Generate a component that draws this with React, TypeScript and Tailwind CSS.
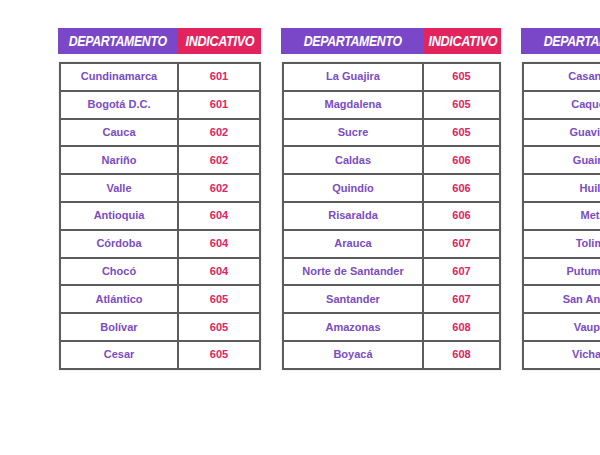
const tables = [
  {
    left: "w-[120px]",
    right: "w-[83px]",
    bodyLeft: "w-[118px]",
    rows: [
      ["Cundinamarca", "601"],
      ["Bogotá D.C.", "601"],
      ["Cauca", "602"],
      ["Nariño", "602"],
      ["Valle", "602"],
      ["Antioquia", "604"],
      ["Córdoba", "604"],
      ["Chocó", "604"],
      ["Atlántico", "605"],
      ["Bolívar", "605"],
      ["Cesar", "605"],
    ],
  },
  {
    left: "w-[143px]",
    right: "w-[77px]",
    bodyLeft: "w-[140px]",
    rows: [
      ["La Guajira", "605"],
      ["Magdalena", "605"],
      ["Sucre", "605"],
      ["Caldas", "606"],
      ["Quindío", "606"],
      ["Risaralda", "606"],
      ["Arauca", "607"],
      ["Norte de Santander", "607"],
      ["Santander", "607"],
      ["Amazonas", "608"],
      ["Boyacá", "608"],
    ],
  },
  {
    left: "w-[143px]",
    right: "w-[77px]",
    bodyLeft: "w-[140px]",
    rows: [
      ["Casanare", "608"],
      ["Caquetá", "608"],
      ["Guaviare", "608"],
      ["Guainía", "608"],
      ["Huila", "608"],
      ["Meta", "608"],
      ["Tolima", "608"],
      ["Putumayo", "608"],
      ["San Andrés", "608"],
      ["Vaupés", "608"],
      ["Vichada", "608"],
    ],
  },
];

type TableProps = { left: string; right: string; bodyLeft: string; rows: string[][] };

function Table({ left, right, bodyLeft, rows }: TableProps) {
  return (
    <div className="flex shrink-0 flex-col">
      {/* Header */}
      <div className="flex h-[26px]">
        <div className={`${left} flex items-center justify-center bg-[#7b47c9]`}>
          <span className="inline-block scale-x-[0.82] text-[15px] font-black italic tracking-tight text-white">
            DEPARTAMENTO
          </span>
        </div>
        <div className={`${right} flex items-center justify-center bg-[#e3245c]`}>
          <span className="inline-block scale-x-[0.84] text-[15px] font-black italic tracking-tight text-white">
            INDICATIVO
          </span>
        </div>
      </div>

      {/* Body */}
      <div className="mt-[8px] ml-[1px] border-2 border-[#5c5c5c] shadow-[0_0_2px_rgba(0,0,0,0.15)]">
        {rows.map(([dept, code], i) => (
          <div
            key={i}
            className={`flex ${i > 0 ? "h-[27.8px] border-t-2 border-[#5c5c5c]" : "h-[25.8px]"}`}
          >
            <div
              className={`${bodyLeft} flex items-center justify-center border-r-2 border-[#5c5c5c] text-[11px] leading-none font-bold text-[#7b4cc2]`}
            >
              {dept}
            </div>
            <div className="flex flex-1 items-center justify-center text-[11px] leading-none font-bold text-[#e0245e]">
              {code}
            </div>
          </div>
        ))}
      </div>
    </div>
  );
}

export default function App() {
  return (
    <div
      className="flex h-[455px] w-[600px] gap-[20px] overflow-hidden bg-white pl-[58px] pt-[28px]"
      style={{ fontFamily: '"Liberation Sans", Arial, sans-serif' }}
    >
      {tables.map((t, i) => (
        <Table key={i} {...t} />
      ))}
    </div>
  );
}
